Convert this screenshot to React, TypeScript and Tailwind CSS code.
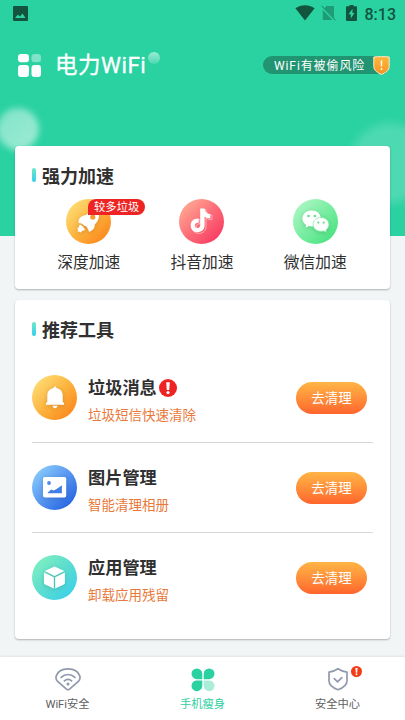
import type { ReactNode } from "react";

const tools = [
  {
    title: "垃圾消息",
    desc: "垃圾短信快速清除",
    alert: true,
    gradient: "from-[#fde77f] via-[#fcb43e] to-[#f97a08]",
    icon: <BellIcon />,
  },
  {
    title: "图片管理",
    desc: "智能清理相册",
    alert: false,
    gradient: "from-[#98d8fc] via-[#5796f0] to-[#1b54dc]",
    icon: <PictureIcon />,
  },
  {
    title: "应用管理",
    desc: "卸载应用残留",
    alert: false,
    gradient: "from-[#86f3bd] via-[#5cddce] to-[#31cdf0]",
    icon: <BoxIcon />,
  },
];

function BellIcon() {
  return (
    <svg viewBox="0 0 45 45" className="size-full drop-shadow-sm" fill="#fff">
      <path d="M23 11.5c.9 0 1.2.6 1.4 1.4 4 .8 6.300 3.600 6.300 7.600v6.600l1.300 1v1.600H14v-1.600l1.300-1v-6.600c0-4 2.300-6.800 6.300-7.600.2-.8.500-1.400 1.400-1.400z" />
      <path d="M20.500 30.800h5c-.3 1.600-1.200 2.400-2.500 2.400s-2.200-.8-2.500-2.400z" />
    </svg>
  );
}

function PictureIcon() {
  return (
    <svg viewBox="0 0 45 45" className="size-full drop-shadow-sm">
      <rect x="11" y="12" width="23.200" height="20.500" rx="1.800" fill="#fff" />
      <circle cx="17" cy="18" r="1.900" fill="#4c8bea" />
      <path
        d="M15.800 28.300v-.8l3.400-3 2.300 1 2.700-1.300 5.700-4v8.100z"
        fill="#4380e6"
      />
    </svg>
  );
}

function BoxIcon() {
  return (
    <svg viewBox="0 0 45 45" className="size-full drop-shadow-sm" fill="#fff">
      <path d="M22.500 11.500 32.400 16 22.500 20.900 12.700 16z" />
      <path d="M12 17.600 21.800 22.200v11.300l-8.700-4.100c-.8-.4-1.100-.8-1.100-1.600z" />
      <path d="M32.900 17.600 23.200 22.200v11.300l8.600-4.100c.8-.4 1.100-.8 1.100-1.600z" />
    </svg>
  );
}

function RocketIcon() {
  return (
    <svg viewBox="0 0 45 45" className="size-full drop-shadow-sm">
      <path
        d="M33.200 14.600c.2 4.800-1.500 8.400-4.400 11 .2 3.300-1.500 5.600-5.600 7.500-.5-1.500-.9-2.700-1.600-3.700-.4-1.500-1.700-2.300-3.200-2.600-1.100-1.500-3.700-2.800-5.900-2.700-.5-4.200 2.200-7.200 7-7.900 3.500-2.900 7.700-3.400 13.700-1.600z"
        fill="#fff"
      />
      <path
        d="M13.400 25.900c1-.4 2 .1 2.200 1.200 1.200-.3 2.100.8 1.700 1.900 1.300 0 2 1.200 1.100 2.300l-2.200.4-1.400 1.700-1.700-.8-1.500.2.400-2.100-.7-1.400 1.600-1z"
        fill="#fff"
      />
      <circle cx="26.800" cy="18" r="2.600" fill="#f59a31" />
    </svg>
  );
}

function NoteIcon() {
  return (
    <svg viewBox="0 0 45 45" className="size-full">
      <path
        d="M22.300 10.500h4.500c.4 3.400 2.400 5.200 6.200 5.600v4.600c-2.300.1-4.300-.5-6-1.600v8.200c0 4.200-3 7.100-7 7.100-4.300 0-7-3-7-6.900 0-4.500 3.700-7.500 8-6.900v4.400c-2.100-.6-3.800.6-3.800 2.500 0 1.500 1.100 2.600 2.600 2.600 1.700 0 2.500-1.200 2.500-2.900z"
        fill="none"
        stroke="#fff"
        strokeOpacity=".65"
        strokeWidth=".7"
      />
      <path
        d="M21.200 9.600h4.300c.5 3.500 2.500 5.300 5.800 5.700v4.200c-2.200 0-4.100-.6-5.700-1.700v8.300c0 4.400-2.900 7.100-6.900 7.100-4.200 0-7-2.900-7-6.800 0-4.400 3.600-7.300 8-6.700v4.300c-2.100-.6-3.800.5-3.800 2.400 0 1.500 1.100 2.600 2.600 2.600 1.800 0 2.700-1.100 2.700-2.900z"
        fill="#fff"
      />
    </svg>
  );
}

function ChatIcon() {
  return (
    <svg viewBox="0 0 45 45" className="size-full drop-shadow-sm">
      <path
        d="M18.700 11.400c5.200 0 9.100 3.500 9.100 8.100 0 4.700-3.900 8-9.100 8-1.100 0-2-.1-2.900-.4l-3.200 1.700.6-2.700c-2.300-1.600-3.800-3.900-3.800-6.600 0-4.600 4-8.100 9.300-8.100z"
        fill="#fff"
      />
      <path
        d="M28 18.500c4.400 0 7.900 3.100 7.900 7 0 2.300-1.200 4.200-3 5.500l.5 2.200-2.700-1.300c-.9.300-1.800.4-2.700.4-4.400 0-7.900-3-7.900-6.800 0-3.900 3.500-7 7.900-7z"
        fill="#fff"
        stroke="#7eeda6"
        strokeWidth=".8"
      />
      <g fill="#67dd8f">
        <circle cx="15.500" cy="17" r="1.300" />
        <circle cx="21.900" cy="17" r="1.300" />
        <circle cx="25.300" cy="23.600" r="1.100" />
        <circle cx="30.700" cy="23.600" r="1.100" />
      </g>
    </svg>
  );
}

function AlertMark({ className }: { className: string }) {
  return (
    <svg viewBox="0 0 18 18" className={className}>
      <circle cx="9" cy="9" r="9" fill="currentColor" />
      <path d="M7.200 3.300h3.600L10.200 10.900H7.800z" fill="#fff" />
      <circle cx="9" cy="13.600" r="1.600" fill="#fff" />
    </svg>
  );
}

function StatusBar() {
  return (
    <div className="flex h-7 items-center justify-between pl-[13px] pr-[9px] text-[#13543f]">
      <svg viewBox="0 0 15 15" className="-mt-px size-[15px]">
        <path
          fillRule="evenodd"
          fill="currentColor"
          d="M1 0h13a1 1 0 0 1 1 1v13a1 1 0 0 1-1 1H1a1 1 0 0 1-1-1V1a1 1 0 0 1 1-1zM2 12h10.500L9.500 7.400 7 10.600 4.800 8.700z"
        />
      </svg>
      <div className="flex items-center">
        <svg viewBox="0 0 20 16" className="-mt-[2px] h-4 w-5">
          <path d="M.4 3.200C6-.8 14-.8 19.600 3.200L10 15.600z" fill="currentColor" />
        </svg>
        <svg viewBox="0 0 15 16" className="-mt-[2px] ml-[6px] h-4 w-[15px]">
          <path d="M5.500 1H13v14H1.800V4.700z" fill="#1f9c76" />
          <path d="M.3 1.500 14 15.800" stroke="#2ad2a2" strokeWidth="2.400" />
          <path d="M.7.900 14.500 15.300" stroke="#18815f" strokeWidth="1" />
        </svg>
        <svg viewBox="0 0 11 16" className="-mt-[2px] ml-[10px] h-4 w-[11px]">
          <path
            d="M3.500 0h4v1.300H10a1 1 0 0 1 1 1V15a1 1 0 0 1-1 1H1a1 1 0 0 1-1-1V2.300a1 1 0 0 1 1-1h2.500z"
            fill="currentColor"
          />
          <path d="M6.500 3.800 2.600 9.200h2.200v4.200L8.500 7.900H6.500z" fill="#2ad2a2" />
        </svg>
        <span className="ml-[8px] pt-px font-[Roboto] text-[16px] font-medium leading-7">
          8:13
        </span>
      </div>
    </div>
  );
}

function TitleBar() {
  return (
    <div className="flex h-[74px] items-center pl-[18px] pr-[20px]">
      <svg viewBox="0 0 23 23" className="size-[23px]" fill="#fff">
        <rect width="11" height="8.200" rx="3" />
        <rect x="13.500" width="9.500" height="8.200" rx="3" opacity=".4" />
        <rect y="11" width="11" height="12" rx="3" />
        <rect x="13.500" y="11" width="9.500" height="12" rx="3" />
      </svg>
      <div className="relative ml-[14px]">
        <h1 className="text-[22.500px] leading-8 tracking-[0.500px] text-white [-webkit-text-stroke:0.300px_#fff]">
          电力WiFi
        </h1>
        <span className="absolute left-[93px] top-[3px] size-3 rounded-full bg-linear-to-b from-white/55 to-white/15" />
      </div>
      <div className="relative ml-auto flex h-[18px] w-[122px] items-center rounded-l-full bg-[#219471] pl-[11px] pt-px text-[12px] tracking-[0.900px] whitespace-nowrap text-white">
        WiFi有被偷风险
        <svg viewBox="0 0 17 19" className="absolute -right-[5px] top-0 h-[19px] w-[17px]">
          <defs>
            <linearGradient id="riskShield" x2="0" y2="1">
              <stop stopColor="#fcb83c" />
              <stop offset="1" stopColor="#f99323" />
            </linearGradient>
          </defs>
          <path
            d="M8.500.6c2.500 0 5.300.1 7.700.4v9.500c0 4-4 6.500-7.700 7.900-3.700-1.400-7.700-3.900-7.700-7.900V1C3.200.700 6 .600 8.500.600z"
            fill="url(#riskShield)"
            stroke="#fbe9cf"
            strokeWidth="1"
          />
          <path d="M7.700 4.500h1.600L9.100 10.600H7.900z" fill="#fff" />
          <circle cx="8.500" cy="13" r=".9" fill="#fff" />
        </svg>
      </div>
    </div>
  );
}

function SectionTitle({ children }: { children: ReactNode }) {
  return (
    <h2 className="flex h-7 items-start gap-[6px] text-[18px] font-bold leading-[30px] text-[#303030]">
      <span className="mt-[6px] h-[14px] w-1 rounded-full bg-linear-to-b from-[#6be8c8] to-[#33cfe8]" />
      {children}
    </h2>
  );
}

function Boost({
  label,
  gradient,
  badge,
  children,
}: {
  label: string;
  gradient: string;
  badge?: string;
  children: ReactNode;
}) {
  return (
    <div className="flex flex-1 flex-col items-center">
      <div className="relative">
        <div className={`size-[45px] rounded-full bg-linear-to-br ${gradient}`}>
          {children}
        </div>
        {badge && (
          <span className="absolute left-[22px] top-0 h-4 w-[57px] rounded-r-full rounded-tl-full bg-[#ee2424] text-center text-[11.300px] leading-[17px] whitespace-nowrap text-white">
            {badge}
          </span>
        )}
      </div>
      <span className="mt-[6px] text-[15.750px] leading-[25px] text-[#303030]">
        {label}
      </span>
    </div>
  );
}

function NavItem({
  label,
  active,
  alert,
  children,
}: {
  label: string;
  active?: boolean;
  alert?: boolean;
  children: ReactNode;
}) {
  return (
    <div className="flex flex-1 flex-col items-center pt-[9px]">
      <div className="relative h-[26px]">
        {children}
        {alert && (
          <AlertMark className="absolute -right-[11px] top-0 size-[11px] text-[#f53a16]" />
        )}
      </div>
      <span
        className={`mt-[2px] text-[11.250px] leading-[21px] ${active ? "text-[#2bcf9f]" : "text-[#606060]"}`}
      >
        {label}
      </span>
    </div>
  );
}

function BottomNav() {
  return (
    <nav className="flex h-[63px] bg-white shadow-[0_-1px_2px_rgba(0,0,0,0.07)]">
      <NavItem label="WiFi安全">
        <svg
          viewBox="0 0 26 26"
          className="size-[26px]"
          fill="none"
          stroke="#9299ad"
          strokeWidth="1.700"
          strokeLinecap="round"
          strokeLinejoin="round"
        >
          <path d="M11.500 23.200 2.600 15.400C1 13.900.7 12 1.200 10 2.800 5 7.400 2.900 13 2.900S23.200 5 24.800 10c.5 2 .2 3.900-1.400 5.400l-8.900 7.800c-1 .8-2 .8-3 0z" />
          <path d="M6.100 11.400c4-3.900 9.800-3.900 13.800 0M9.400 14.900c2.100-2.100 5.100-2.100 7.200 0" />
          <circle cx="13" cy="18" r=".7" fill="#9299ad" />
        </svg>
      </NavItem>
      <NavItem label="手机瘦身" active>
        <svg viewBox="0 0 26 26" className="size-[26px]" fill="#2bd1a0">
          <path d="M12.300 13.200H7.300a5.400 5.400 0 1 1 5-5.300z" />
          <path d="M13.700 13.200h5a5.400 5.400 0 1 0-5-5.300z" />
          <path d="M12.300 14.400H7.300a5.400 5.400 0 1 0 5 5.300z" />
          <path d="M13.700 14.400h5a5.400 5.400 0 1 1-5 5.300z" opacity=".4" />
        </svg>
      </NavItem>
      <NavItem label="安全中心" alert>
        <svg
          viewBox="0 0 26 26"
          className="size-[26px]"
          fill="none"
          stroke="#9299ad"
          strokeWidth="1.700"
          strokeLinecap="round"
          strokeLinejoin="round"
        >
          <path d="M13 2.800c2.700 1.900 5.500 2.900 9 3.300v8.700c0 4.600-4.500 7.400-9 8.900-4.500-1.500-9-4.300-9-8.900V6.100c3.500-.4 6.300-1.400 9-3.300z" />
          <path d="m9.300 12.700 3.300 3.200 4.200-4.300" />
        </svg>
      </NavItem>
    </nav>
  );
}

export default function App() {
  return (
    <div className="relative isolate flex h-[720px] w-[405px] flex-col overflow-hidden bg-[#f1f5f6] font-['Roboto','Noto_Sans_CJK_SC',sans-serif]">
      {/* header backdrop with soft bubbles */}
      <div className="absolute inset-x-0 top-0 -z-10 h-[236px] overflow-hidden bg-[#2ad2a2]">
        <div className="absolute -left-[3px] top-[108px] size-[42px] rounded-full bg-linear-to-br from-white/40 to-white/55 blur-[3px]" />
        <div className="absolute left-[350px] top-[123px] size-[80px] rounded-full bg-white/17 blur-[4px]" />
      </div>

      <StatusBar />
      <TitleBar />

      <section className="mx-[15px] mt-[43.500px] h-[143.500px] rounded-[4px] bg-white pl-[17px] pr-[18px] pt-[16px] shadow-[0_1px_2px_rgba(0,0,0,0.28)]">
        <SectionTitle>强力加速</SectionTitle>
        <div className="mt-[9px] flex">
          <Boost
            label="深度加速"
            badge="较多垃圾"
            gradient="from-[#fde77f] via-[#fcb43e] to-[#f97a08]"
          >
            <RocketIcon />
          </Boost>
          <Boost
            label="抖音加速"
            gradient="from-[#ffb69b] via-[#fb6d78] to-[#f81b5c]"
          >
            <NoteIcon />
          </Boost>
          <Boost
            label="微信加速"
            gradient="from-[#b5f9ca] via-[#79eda2] to-[#36df77]"
          >
            <ChatIcon />
          </Boost>
        </div>
      </section>

      <section className="mx-[15px] mt-[11px] h-[339px] rounded-[4px] bg-white px-[17px] pt-[16px] shadow-[0_1px_2px_rgba(0,0,0,0.28)]">
        <SectionTitle>推荐工具</SectionTitle>
        <ul className="mt-[9px]">
          {tools.map((tool) => (
            <li
              key={tool.title}
              className="flex h-[90px] items-center border-b border-[#d8d8d8] last:border-transparent"
            >
              <div
                className={`size-[45px] rounded-full bg-linear-to-br ${tool.gradient}`}
              >
                {tool.icon}
              </div>
              <div className="ml-[11px] pt-[8px]">
                <div className="flex items-center gap-[2px] text-[17.200px] font-bold leading-7 text-[#303030]">
                  {tool.title}
                  {tool.alert && (
                    <AlertMark className="-mt-px size-[18px] text-[#ee2424]" />
                  )}
                </div>
                <p className="text-[13.500px] leading-[27px] text-[#e8793b]">
                  {tool.desc}
                </p>
              </div>
              <button
                type="button"
                className="ml-auto mr-[6px] h-8 w-[71px] rounded-full bg-linear-to-b from-[#ffb546] to-[#ff642d] pt-px text-[13.500px] text-white"
              >
                去清理
              </button>
            </li>
          ))}
        </ul>
      </section>

      <div className="mt-auto">
        <BottomNav />
      </div>
    </div>
  );
}
